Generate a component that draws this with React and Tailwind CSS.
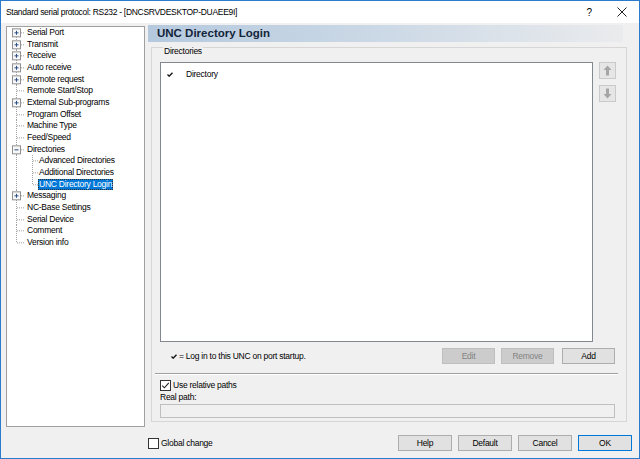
import React from 'react';

// tree rows of the settings dialog
const treeItems = [
    { label: 'Serial Port', box: '+' },
    { label: 'Transmit', box: '+' },
    { label: 'Receive', box: '+' },
    { label: 'Auto receive', box: '+' },
    { label: 'Remote request', box: '+' },
    { label: 'Remote Start/Stop' },
    { label: 'External Sub-programs', box: '+' },
    { label: 'Program Offset' },
    { label: 'Machine Type' },
    { label: 'Feed/Speed' },
    { label: 'Directories', box: '-' },
    { label: 'Advanced Directories', level: 1 },
    { label: 'Additional Directories', level: 1 },
    { label: 'UNC Directory Login', level: 1, lastChild: true, selected: true },
    { label: 'Messaging', box: '+' },
    { label: 'NC-Base Settings' },
    { label: 'Serial Device' },
    { label: 'Comment' },
    { label: 'Version info', last: true },
];

const H = 11.66;
const C = H / 2;

const TreeConnector = ({ item, first }) => {
    const level = item.level || 0;
    const w = level ? 31 : 19;
    const dash = { stroke: '#a0a0a0', strokeWidth: 1, strokeDasharray: '1 1' };
    return (
        <svg width={w} height={H} viewBox={`0 0 ${w} ${H}`} className="shrink-0">
            {/* root vertical line */}
            <line x1="9.5" y1={first ? C : 0} x2="9.5" y2={item.last ? C : H} {...dash} />
            {level === 0 && <line x1="10" y1={C} x2="18" y2={C} {...dash} />}
            {level === 1 && (
                <>
                    <line x1="25.5" y1="0" x2="25.5" y2={item.lastChild ? C : H} {...dash} />
                    <line x1="26" y1={C} x2="31" y2={C} {...dash} />
                </>
            )}
            {item.box && (
                <g>
                    <rect x="5.5" y={C - 4} width="8" height="8" fill="#f7f7f7" stroke="#919191" />
                    <line x1="7.5" y1={C} x2="11.5" y2={C} stroke="#2b4f86" />
                    {item.box === '+' && <line x1="9.5" y1={C - 2} x2="9.5" y2={C + 2} stroke="#2b4f86" />}
                </g>
            )}
        </svg>
    );
};

const Tree = () => (
    <div className="w-[139px] h-[401px] mt-[1px] bg-white border border-[#a0a0a0] overflow-hidden">
        {treeItems.map((item, i) => (
            <div key={item.label} className="flex items-center h-[11.66px] leading-[11.66px]">
                <TreeConnector item={item} first={i === 0} />
                <span
                    className={
                        item.selected
                            ? 'px-[1px] bg-[#0078d7] text-white outline outline-1 outline-dotted outline-[#333] -outline-offset-1'
                            : 'px-[1px] text-black'
                    }
                >
                    {item.label}
                </span>
            </div>
        ))}
    </div>
);

const CheckMark = ({ className = '' }) => (
    <svg width="6" height="5" viewBox="0 0 7 6" className={className}>
        <path d="M0.5 3 L2.5 5 L6.5 0.8" fill="none" stroke="#111" strokeWidth="1.6" />
    </svg>
);

const Checkbox = ({ checked, label }) => (
    <div className="flex items-center gap-[2px]">
        <div className="w-[11px] h-[11px] border border-[#333] bg-white flex items-center justify-center">
            {checked && (
                <svg width="9" height="9" viewBox="0 0 9 9">
                    <path d="M1.2 4.6 L3.4 6.8 L7.8 1.8" fill="none" stroke="#222" strokeWidth="1.1" />
                </svg>
            )}
        </div>
        <span>{label}</span>
    </div>
);

const Button = ({ children, disabled, primary, className = '' }) => (
    <div
        className={
            'h-[16px] flex items-center justify-center border ' +
            (disabled
                ? 'bg-[#cccccc] border-[#bfbfbf] text-[#838383] '
                : primary
                ? 'bg-[#e1e1e1] border-[#0078d7] text-black '
                : 'bg-[#e1e1e1] border-[#adadad] text-black ') +
            className
        }
    >
        {children}
    </div>
);

const ArrowButton = ({ down }) => (
    <div className="w-[17px] h-[17px] bg-[#e6e6e6] border border-[#cacaca] flex items-center justify-center">
        <svg width="9" height="11" viewBox="0 0 9 11" className={down ? 'rotate-180' : ''}>
            <path d="M4.5 0.5 L8.5 5 L6 5 L6 10.5 L3 10.5 L3 5 L0.5 5 Z" fill="#a6a6a6" />
        </svg>
    </div>
);

export default function App() {
    return (
        <div className="w-[640px] h-[459px] border border-[#2b7ccd] flex flex-col bg-[#f0f0f0] text-[8.5px] tracking-[-0.25px] font-['Liberation_Sans',Arial,sans-serif] text-black overflow-hidden">
            {/* Title bar */}
            <div className="h-[22px] bg-white flex items-center pl-[5px] shrink-0">
                <span className="text-[8.5px] tracking-[-0.3px] text-black scale-y-110">
                    Standard serial protocol: RS232 - [DNCSRVDESKTOP-DUAEE9I]
                </span>
                <span className="ml-auto text-[10px] tracking-normal mr-[25px]">?</span>
                <svg width="10" height="10" viewBox="0 0 10 10" className="mr-[12px]">
                    <path d="M0.5 0.5 L9.5 9.5 M9.5 0.5 L0.5 9.5" stroke="#222" strokeWidth="1" />
                </svg>
            </div>

            {/* Body */}
            <div className="flex flex-col pl-[5px] pr-[7px] pt-[2px]">
                <div className="flex gap-[3px] h-[403px]">
                    <Tree />

                    <div className="flex flex-col w-[483px]">
                        <div className="w-[475px] h-[17px] flex items-center pl-[9px] bg-linear-to-r from-[#b5c9de] via-[#ccd9e6] to-[#eaebed]">
                            <span className="text-[11.5px] tracking-normal font-bold text-[#14243a]">UNC Directory Login</span>
                        </div>

                        <fieldset className="ml-[3px] -mt-[4px] w-[476px] border border-[#d6d6d6] pl-[8px] pr-[10px] pb-[3px]">
                            <legend className="ml-[3px] px-[1px] pt-[8px] leading-[10px]">Directories</legend>

                            <div className="flex gap-[6px] mt-[6px]">
                                <div className="w-[433px] h-[280px] bg-white border border-[#828790] pt-[6px] pl-[6px]">
                                    <div className="flex items-center h-[10px]">
                                        <CheckMark />
                                        <span className="ml-[13px]">Directory</span>
                                    </div>
                                </div>
                                <div className="flex flex-col gap-[6px]">
                                    <ArrowButton />
                                    <ArrowButton down />
                                </div>
                            </div>

                            <div className="flex items-center mt-[6px] h-[16px]">
                                <CheckMark className="ml-[11px]" />
                                <span className="ml-[2px]">= Log in to this UNC on port startup.</span>
                                <Button disabled className="ml-auto w-[53px]">Edit</Button>
                                <Button disabled className="ml-[6px] w-[53px]">Remove</Button>
                                <Button className="ml-[8px] mr-[1px] w-[53px]">Add</Button>
                            </div>

                            <div className="mt-[9px] -ml-[5px] -mr-[2px] border-t border-[#a0a0a0] border-b border-b-white" />

                            <div className="mt-[4px] h-[11px]">
                                <Checkbox checked label="Use relative paths" />
                            </div>
                            <div className="mt-[2px] leading-[10px]">Real path:</div>
                            <div className="mt-[2px] w-[455px] h-[14px] border border-[#bfbfbf] bg-[#f0f0f0]" />
                        </fieldset>
                    </div>
                </div>

                {/* Bottom row */}
                <div className="flex items-center mt-[7px] h-[16px]">
                    <div className="ml-[142px]">
                        <Checkbox label="Global change" />
                    </div>
                    <div className="ml-auto flex gap-[6px]">
                        <Button className="w-[54px]">Help</Button>
                        <Button className="w-[54px]">Default</Button>
                        <Button className="w-[54px]">Cancel</Button>
                        <Button primary className="w-[54px]">OK</Button>
                    </div>
                </div>
            </div>
        </div>
    );
}
